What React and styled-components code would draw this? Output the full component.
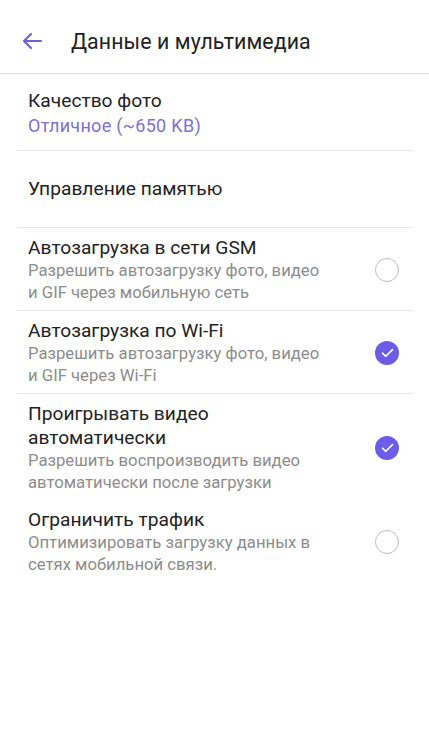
import React from "react";
import styled, { createGlobalStyle } from "styled-components";

const Global = createGlobalStyle`
  html, body { margin: 0; padding: 0; background: #ffffff; }
  body { font-family: Roboto, "Noto Sans", "Liberation Sans", sans-serif; -webkit-font-smoothing: antialiased; }
`;

const Screen = styled.div`
  width: 429px;
  min-height: 746px;
  background: #fff;
  display: flex;
  flex-direction: column;
`;

const Header = styled.header`
  height: 73px;
  display: flex;
  align-items: center;
  border-bottom: 1px solid #dedede;
  box-sizing: content-box;
  padding: 9px 0 0 21px;
  height: 64px;
`;

const BackButton = styled.button`
  border: 0;
  background: none;
  padding: 0;
  width: 22px;
  height: 22px;
  display: flex;
  align-items: center;
  justify-content: center;
  margin-right: 28px;
`;

const Title = styled.h1`
  margin: 0;
  font-size: 21.3px;
  font-weight: 400;
  color: #212121;
  letter-spacing: 0.1px;
`;

const List = styled.div`
  margin: 0 16px 0 17px;
  display: flex;
  flex-direction: column;
`;

const Item = styled.div`
  display: flex;
  align-items: center;
  padding: ${(p) => p.$pad || "8px 14px 6px 11px"};
  min-height: ${(p) => p.$minH || "auto"};
  box-sizing: border-box;
  border-bottom: ${(p) => (p.$divider ? "1px solid #e6e6e6" : "none")};
`;

const Texts = styled.div`
  flex: 1;
  display: flex;
  flex-direction: column;
`;

const ItemTitle = styled.div`
  font-size: 19.2px;
  line-height: 24px;
  color: #222;
  white-space: pre-line;
`;

const ItemSub = styled.div`
  font-size: 16.7px;
  line-height: 22px;
  color: ${(p) => (p.$accent ? "#7d70cf" : "#8c8c8c")};
  white-space: pre-line;
  ${(p) => p.$accent && "font-size: 18px; line-height: 26px; letter-spacing: 0.3px;"}
`;

const Radio = styled.span`
  flex: none;
  width: 24px;
  height: 24px;
  border-radius: 50%;
  box-sizing: border-box;
  border: ${(p) => (p.$on ? "none" : "1.5px solid #bdbdbd")};
  background: ${(p) => (p.$on ? "#6c5ce7" : "#fff")};
  display: flex;
  align-items: center;
  justify-content: center;
`;

const Check = () => (
  <svg width="13" height="10" viewBox="0 0 13 10">
    <path d="M1.5 5.2 L4.8 8.3 L11.5 1.6" fill="none" stroke="#fff" strokeWidth="1.6" strokeLinecap="round" strokeLinejoin="round" />
  </svg>
);

const items = [
  { t: "Автозагрузка в сети GSM", s: "Разрешить автозагрузку фото, видео\nи GIF через мобильную сеть", on: false, div: true },
  { t: "Автозагрузка по Wi-Fi", s: "Разрешить автозагрузку фото, видео\nи GIF через Wi-Fi", on: true, div: true },
  { t: "Проигрывать видео\nавтоматически", s: "Разрешить воспроизводить видео\nавтоматически после загрузки", on: true, div: false },
  { t: "Ограничить трафик", s: "Оптимизировать загрузку данных в\nсетях мобильной связи.", on: false, div: false },
];

export default function App() {
  return (
    <Screen>
      <Global />
      <Header>
        <BackButton aria-label="Назад">
          <svg width="22" height="18" viewBox="0 0 22 18">
            <path d="M20 9 H3 M10 2 L3 9 L10 16" fill="none" stroke="#6f5fdc" strokeWidth="2.2" strokeLinecap="round" strokeLinejoin="round" />
          </svg>
        </BackButton>
        <Title>Данные и мультимедиа</Title>
      </Header>
      <List>
        <Item $divider $pad="15px 14px 11px 11px">
          <Texts>
            <ItemTitle>Качество фото</ItemTitle>
            <ItemSub $accent>Отличное (~650 KB)</ItemSub>
          </Texts>
        </Item>
        <Item $divider $minH="77px" $pad="0 14px 0 11px">
          <Texts>
            <ItemTitle>Управление памятью</ItemTitle>
          </Texts>
        </Item>
        {items.map((it) => (
          <Item key={it.t} $divider={it.div}>
            <Texts>
              <ItemTitle>{it.t}</ItemTitle>
              <ItemSub>{it.s}</ItemSub>
            </Texts>
            <Radio $on={it.on}>{it.on && <Check />}</Radio>
          </Item>
        ))}
      </List>
    </Screen>
  );
}
